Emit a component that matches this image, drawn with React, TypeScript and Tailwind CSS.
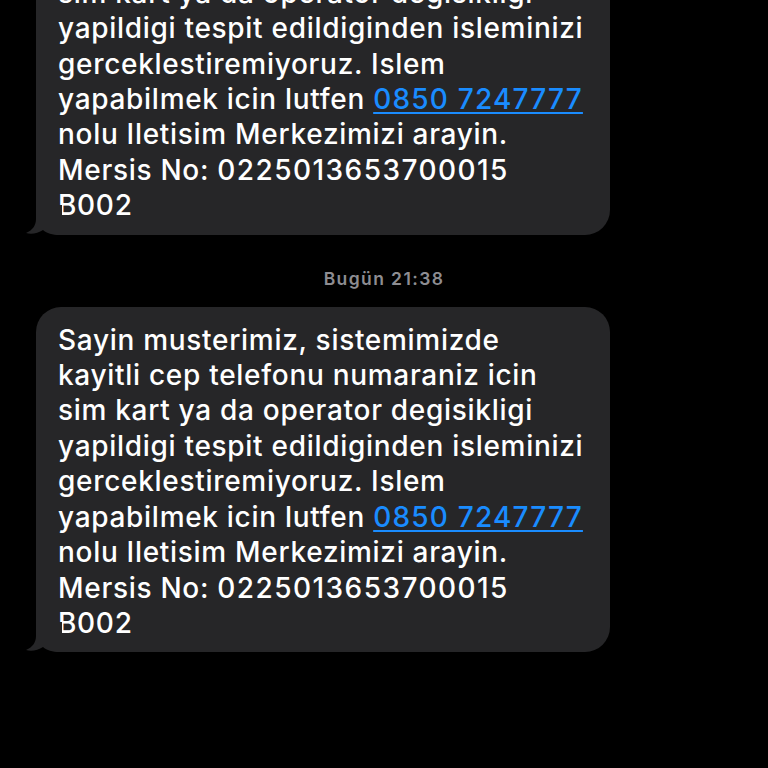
const lines = [
  'Sayin musterimiz, sistemimizde',
  'kayitli cep telefonu numaraniz icin',
  'sim kart ya da operator degisikligi',
  'yapildigi tespit edildiginden isleminizi',
  'gerceklestiremiyoruz. Islem',
]

function Tail() {
  return (
    <svg className="absolute bottom-0 left-[-14px] h-[30px] w-[40px]" viewBox="0 0 40 30" fill="#262628">
      <path d="M14 0 L14 14 C14 20 11 25 4 28 C9 29.5 16 28.5 21 25 C25 28.5 30 30 38 30 L40 30 L40 0 Z" />
    </svg>
  )
}

function Bubble({ className }: { className?: string }) {
  return (
    <div className={`relative w-[574px] ${className ?? ''}`}>
      <div className="rounded-[25px] bg-[#262628] pt-[16px] pb-[11px] pl-[22px] pr-[16px] text-[28px] font-medium leading-[35.4px] tracking-[0.7px] text-white">
        {lines.map((line) => (
          <div key={line} className="whitespace-nowrap">{line}</div>
        ))}
        <div className="whitespace-nowrap">
          yapabilmek icin lutfen <span className="tracking-[1.2px] text-[#1a8cff] underline decoration-[2px] underline-offset-[3px]">0850 7247777</span>
        </div>
        <div className="whitespace-nowrap">nolu Iletisim Merkezimizi arayin.</div>
        <div className="whitespace-nowrap">
          Mersis No: <span className="tracking-[1.45px]">0225013653700015</span>
        </div>
        <div className="whitespace-nowrap">B002</div>
      </div>
      <Tail />
    </div>
  )
}

export default function App() {
  return (
    <div className="h-[768px] w-[768px] overflow-hidden bg-black font-['Inter','Noto_Sans',sans-serif]">
      <div className="flex flex-col pl-[36px]">
        <Bubble className="mt-[-111px]" />
        <div className="-ml-[36px] pt-[34px] pb-[18px] text-center text-[17.5px] font-semibold leading-[20px] tracking-[1.4px] text-[#8d8d92]">
          Bugün 21:38
        </div>
        <Bubble />
      </div>
    </div>
  )
}
